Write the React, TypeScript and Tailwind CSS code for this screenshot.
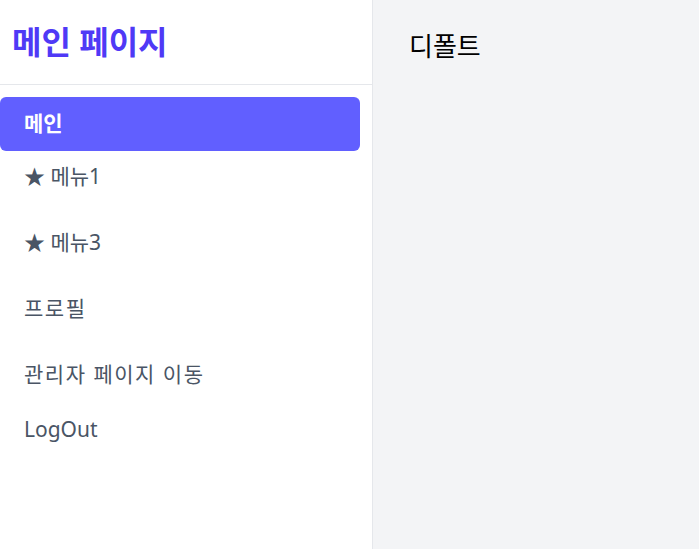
const menuItems = [
  { label: "★ 메뉴1", className: "mt-[4px]" },
  { label: "★ 메뉴3", className: "mt-[22px]" },
  { label: "프로필", className: "mt-[22px] tracking-[1.5px]" },
  { label: "관리자 페이지 이동", className: "mt-[22px] tracking-[1.5px]" },
  { label: "LogOut", className: "mt-[11px]" },
];

const App = () => {
  return (
    <div
      className="flex h-[549px] w-full"
      style={{ fontFamily: '"Noto Sans", "Noto Sans CJK KR", sans-serif' }}
    >
      <aside className="flex w-[373px] shrink-0 flex-col border-r border-gray-200 bg-white">
        <div className="border-b border-gray-200 px-3 py-6">
          <h1 className="text-[32px] leading-9 font-bold text-indigo-600">메인 페이지</h1>
        </div>
        <nav className="flex flex-col pt-3 pr-3">
          <a className="flex h-[54px] items-center rounded-md bg-indigo-500 px-6 text-[21px] font-bold text-white">
            메인
          </a>
          {menuItems.map((item) => (
            <a
              key={item.label}
              className={`flex h-11 items-center px-6 text-[21px] text-gray-600 ${item.className}`}
            >
              {item.label}
            </a>
          ))}
        </nav>
      </aside>
      <main className="flex-1 bg-gray-100 pt-[30px] pl-[36px]">
        <p className="text-[26px] leading-8 text-black">디폴트</p>
      </main>
    </div>
  );
};

export default App;
